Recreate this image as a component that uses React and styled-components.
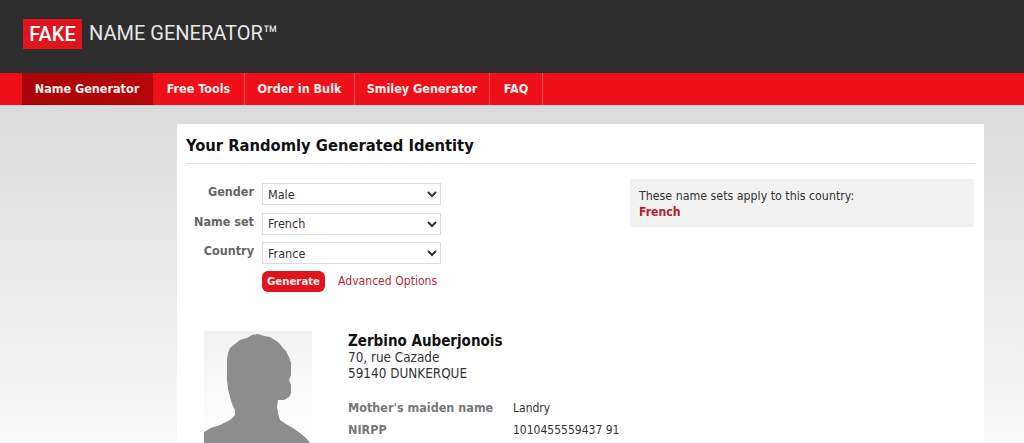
import React from "react";
import styled, { createGlobalStyle } from "styled-components";

const Global = createGlobalStyle`
  html, body { margin: 0; padding: 0; height: 443px; overflow: hidden; background: #fff; }
  body { font-family: "DejaVu Sans Condensed", "DejaVu Sans", sans-serif; }
`;
const Page = styled.div`
  width: 1024px; height: 443px; overflow: hidden;
  display: flex; flex-direction: column;
`;
const Header = styled.header`
  height: 73px; flex: none; box-sizing: border-box; background: #2e2e2e;
  padding: 19px 0 0 23px; display: flex; align-items: flex-start; gap: 7px;
`;
const FakeMark = styled.div`
  height: 30px; width: 59px; background: #e0141c; color: #fff; box-sizing: border-box;
  font: 500 20px/30px Roboto, sans-serif; text-align: center;
`;
const LogoText = styled.div`
  color: #e6e6e6; font: 400 20px/28px Roboto, sans-serif; letter-spacing: 0;
`;
const Trademark = styled.span`
  font-size: 25px; line-height: 0; vertical-align: -3px;
`;
const Nav = styled.nav`
  height: 32px; flex: none; background: #ee0f18; padding-left: 22px; display: flex;
`;
const NavItem = styled.a`
  display: block; box-sizing: border-box; height: 32px; width: ${p => p.$w}px; text-align: center;
  font: 700 12.5px/31px "DejaVu Sans Condensed", sans-serif; color: #fdf0f0;
  border-right: 1px solid ${p => (p.$active ? "transparent" : "#f4545a")};
  background: ${p => (p.$active ? "linear-gradient(90deg,#a80408,#b80509)" : "transparent")};
`;
const Main = styled.main`
  flex: 1; min-height: 0; padding: 19px 40px 0 177px;
  background: linear-gradient(180deg, #dbdbdb 0, #f8f8f8 100%);
`;
const Card = styled.section`
  background: #fff; height: 100%; box-sizing: border-box; width: 807px;
  padding: 9px 9px 0 9px;
`;
const Title = styled.h1`
  margin: 0; height: 30px; border-bottom: 1px solid #dfdfdf; color: #111;
  font: 700 16.4px/25px "DejaVu Sans Condensed", sans-serif;
`;
const FormRow = styled.div`
  display: flex; justify-content: space-between; padding-top: 15px; height: 144px; box-sizing: border-box;
`;
const Form = styled.div`
  display: grid; grid-template-columns: 68px 179px; column-gap: 8px; row-gap: 7.5px; margin-top: 4px;
  align-content: start; grid-auto-rows: 22px; width: 255px;
`;
const Label = styled.label`
  color: #666; font: 700 12.5px/17px "DejaVu Sans Condensed", sans-serif; text-align: right; white-space: nowrap;
`;
const Select = styled.select`
  height: 22px; width: 179px; background: #fff; border: 1px solid #dcdcdc; padding: 0 0 0 1px;
  color: #333; font: 400 12.5px "DejaVu Sans Condensed", sans-serif; border-radius: 0;
`;
const Actions = styled.div`
  grid-column: 2; display: flex; align-items: center; gap: 13px; height: 21px; white-space: nowrap; margin-top: -1px;
`;
const Generate = styled.button`
  width: 63px; height: 21px; padding: 0; border: 0; border-radius: 6px; background: #e0141c; color: #fdeeee;
  font: 700 11.3px "DejaVu Sans Condensed", sans-serif;
`;
const Advanced = styled.a`
  color: #b02a37; font: 400 12.1px/17px "DejaVu Sans Condensed", sans-serif; margin-top: 1px;
`;
const InfoBox = styled.aside`
  width: 344px; height: 48px; box-sizing: border-box; background: #f2f2f2; padding: 9px 8px 0 9px; margin-right: 1px;
  color: #333; font: 400 12.3px/16px "DejaVu Sans Condensed", sans-serif;
  strong { display: block; color: #b81c2c; font-weight: 700; font-size: 12.2px; }
`;
const Person = styled.div`
  display: flex; padding: 23px 0 0 18px; gap: 36px;
`;
const Photo = styled.div`
  width: 108px; height: 113px; flex: none; background: linear-gradient(180deg,#f2f2f2,#fff);
  svg { display: block; }
`;
const Details = styled.div`
  color: #333; padding-top: 1px;
`;
const Name = styled.h2`
  margin: 0; color: #111; font: 700 15px/18px "DejaVu Sans Condensed", sans-serif;
`;
const Address = styled.div`
  font: 400 13.4px/16px "DejaVu Sans Condensed", sans-serif; margin-bottom: 15px;
`;
const Facts = styled.dl`
  margin: 0; display: grid; grid-template-columns: 165px auto; grid-auto-rows: 22px;
`;
const Term = styled.dt`
  color: #777; font: 700 12.5px/22px "DejaVu Sans Condensed", sans-serif; white-space: nowrap;
`;
const Value = styled.dd`
  margin: 0; color: #333; font: 400 12px/22px "DejaVu Sans Condensed", sans-serif; white-space: nowrap;
`;

export default function App() {
  return (
    <Page>
      <Global />
      <Header>
        <FakeMark>FAKE</FakeMark>
        <LogoText>NAME GENERATOR<Trademark>™</Trademark></LogoText>
      </Header>
      <Nav>
        <NavItem $active $w={131}>Name Generator</NavItem>
        <NavItem $w={92}>Free Tools</NavItem>
        <NavItem $w={110}>Order in Bulk</NavItem>
        <NavItem $w={135}>Smiley Generator</NavItem>
        <NavItem $w={53}>FAQ</NavItem>
      </Nav>
      <Main>
        <Card>
          <Title>Your Randomly Generated Identity</Title>
          <FormRow>
            <Form>
              <Label>Gender</Label>
              <Select defaultValue="Male"><option>Male</option></Select>
              <Label>Name set</Label>
              <Select defaultValue="French"><option>French</option></Select>
              <Label>Country</Label>
              <Select defaultValue="France"><option>France</option></Select>
              <Actions>
                <Generate>Generate</Generate>
                <Advanced>Advanced Options</Advanced>
              </Actions>
            </Form>
            <InfoBox>
              These name sets apply to this country:
              <strong>French</strong>
            </InfoBox>
          </FormRow>
          <Person>
            <Photo>
              <svg width="108" height="113" viewBox="0 0 108 113">
                <path fill="#8d8d8d" d="M54 3 L48 4 L43 7 L36 9 L31 13 L26 17 L24 22 L23 28 L23 49 L24 58 L26 66 L28 73 L31 79 L31 84 L26 89 L16 94 L7 97 L0 101 L0 113 L107 113 L102 107 L96 102 L89 97 L82 93 L76 89 L74 82 L73 76 L74 69 L80 69 L85 66 L87 62 L87 54 L85 49 L87 44 L87 32 L85 26 L82 20 L79 17 L75 12 L71 9 L66 6 L60 5 Z" />
              </svg>
            </Photo>
            <Details>
              <Name>Zerbino Auberjonois</Name>
              <Address>70, rue Cazade<br />59140 DUNKERQUE</Address>
              <Facts>
                <Term>Mother's maiden name</Term>
                <Value>Landry</Value>
                <Term>NIRPP</Term>
                <Value>1010455559437 91</Value>
              </Facts>
            </Details>
          </Person>
        </Card>
      </Main>
    </Page>
  );
}
